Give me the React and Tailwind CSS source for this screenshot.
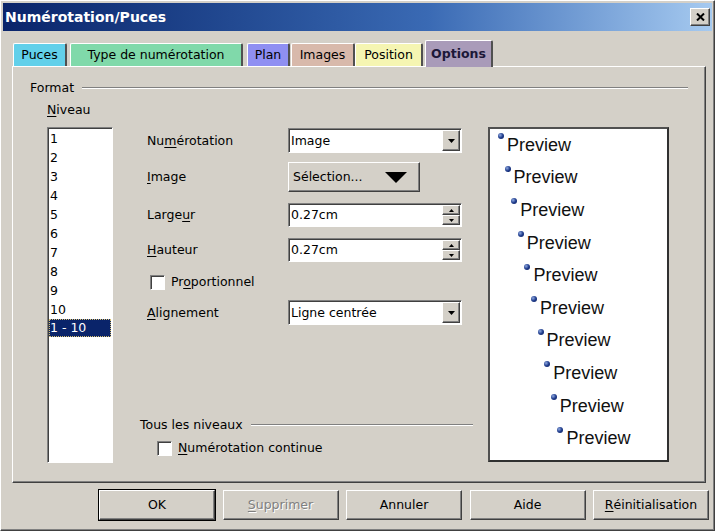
import React from "react";

const font = "font-['DejaVu_Sans',sans-serif] text-[12.5px] leading-[16px] text-black";
const raised =
  "border border-t-white border-l-white border-r-[#404040] border-b-[#404040] shadow-[inset_-1px_-1px_0_#808080]";
const sunken =
  "border border-t-[#808080] border-l-[#808080] border-r-white border-b-white shadow-[inset_1px_1px_0_#404040]";

const Key = ({ children }) => (
  <span className="underline decoration-1 underline-offset-[2px]">{children}</span>
);

const TABS = [
  { label: "Puces", cls: "ml-[10px] w-[54px] bg-[#62d0ea]" },
  { label: "Type de numérotation", cls: "ml-[3px] w-[173px] bg-[#80d9aa]" },
  { label: "Plan", cls: "ml-[4px] w-[43px] bg-[#8f8ff2]" },
  { label: "Images", cls: "ml-[1px] w-[64px] bg-[#d8b9ab]" },
  { label: "Position", cls: "ml-0 w-[68px] bg-[#f5f5b2]" },
];

const LEVELS = ["1", "2", "3", "4", "5", "6", "7", "8", "9", "10"];

const DownTri = () => (
  <svg width="7" height="4" viewBox="0 0 7 4">
    <path d="M0 0h7L3.5 4z" fill="#000" />
  </svg>
);

const Combo = ({ value }) => (
  <div className={`${sunken} bg-white h-[25px] w-[174px] p-[1px] flex items-center`}>
    <span className="flex-1 pl-[1px]">{value}</span>
    <div className={`${raised} bg-[#d4d0c8] w-[18px] h-full flex items-center justify-center`}>
      <DownTri />
    </div>
  </div>
);

const Spin = ({ value }) => (
  <div className={`${sunken} bg-white h-[24px] w-[174px] p-[1px] flex items-center`}>
    <span className="flex-1 pl-[1px]">{value}</span>
    <div className="w-[18px] h-full flex flex-col">
      <div className={`${raised} bg-[#d4d0c8] flex-1 flex items-center justify-center`}>
        <svg width="5" height="3" viewBox="0 0 5 3">
          <path d="M0 3h5L2.5 0z" fill="#000" />
        </svg>
      </div>
      <div className={`${raised} bg-[#d4d0c8] flex-1 flex items-center justify-center`}>
        <svg width="5" height="3" viewBox="0 0 5 3">
          <path d="M0 0h5L2.5 3z" fill="#000" />
        </svg>
      </div>
    </div>
  </div>
);

const Check = () => <span className={`${sunken} bg-white w-[15px] h-[15px] shrink-0`} />;

const Row = ({ label, mt, h, children }) => (
  <div className={`flex items-center ${mt} ${h}`}>
    <div className="w-[141px]">{label}</div>
    {children}
  </div>
);

export default function App() {
  return (
    <div
      className={`${font} ${raised} w-[715px] h-[531px] bg-[#d4d0c8] p-[2px] flex flex-col overflow-hidden`}
    >
      {/* title bar */}
      <div className="h-[28px] shrink-0 bg-linear-to-r from-[#0a246a] via-[#3a6ab4] via-60% to-[#a6caf0] flex items-center pl-[2px] pr-[2px]">
        <span className="text-white font-bold text-[14px] leading-[18px] flex-1">Numérotation/Puces</span>
        <div className={`${raised} bg-[#d4d0c8] w-[20px] h-[18px] flex items-center justify-center`}>
          <svg width="9" height="8" viewBox="0 0 9 8">
            <path d="M1 0.5l7 7M8 0.5l-7 7" stroke="#000" strokeWidth="2" />
          </svg>
        </div>
      </div>

      {/* tabs */}
      <div className="mt-[9px] h-[26px] flex items-end shrink-0">
        {TABS.map((t) => (
          <div
            key={t.label}
            className={`${t.cls} h-[23px] flex items-center justify-center rounded-t-[2px] border-t border-l border-t-white border-l-white border-r-2 border-r-[#505050]`}
          >
            {t.label}
          </div>
        ))}
        <div className="relative z-10 ml-[2px] w-[68px] h-[27px] -mb-[1px] bg-[#a99bb9] flex items-center justify-center rounded-t-[2px] border-t border-l border-t-white border-l-white border-r-2 border-r-[#505050] font-bold text-[#1c1838]">
          Options
        </div>
      </div>

      {/* panel */}
      <div className={`${raised} ml-[9px] mr-[6px] h-[417px] shrink-0 flex flex-col`}>
        <div className="mt-[13px] pl-[17px] pr-[17px] flex items-center h-[16px]">
          <span>Format</span>
          <div className="flex-1 ml-[8px] border-t border-t-[#808080] border-b border-b-white" />
        </div>

        <div className="pl-[34px]">
          <div className="mt-[6px] h-[16px]">
            <Key>N</Key>iveau
          </div>

          <div className="mt-[9px] flex">
            {/* level list */}
            <div className={`${sunken} bg-white w-[66px] h-[336px] p-[1px]`}>
              {LEVELS.map((l) => (
                <div key={l} className="h-[19px] leading-[19px] pl-[1px]">
                  {l}
                </div>
              ))}
              <div className="h-[18px] leading-[18px] pl-[1px] bg-[#0a246a] text-white outline-1 outline-dotted outline-[#d8c070] -outline-offset-1">
                1 - 10
              </div>
            </div>

            {/* settings */}
            <div className="ml-[34px] w-[326px] h-[336px] flex flex-col">
              <Row label={<>Nu<Key>m</Key>érotation</>} mt="mt-[1px]" h="h-[25px]">
                <Combo value="Image" />
              </Row>
              <Row label={<><Key>I</Key>mage</>} mt="mt-[9px]" h="h-[30px]">
                <div className={`${raised} bg-[#d4d0c8] w-[132px] h-[30px] flex items-center pl-[4px]`}>
                  <span className="w-[92px]">Sélection...</span>
                  <svg width="22" height="11" viewBox="0 0 22 11">
                    <path d="M0 0h22L11 11z" fill="#000" />
                  </svg>
                </div>
              </Row>
              <Row label={<>Large<Key>u</Key>r</>} mt="mt-[11px]" h="h-[24px]">
                <Spin value="0.27cm" />
              </Row>
              <Row label={<><Key>H</Key>auteur</>} mt="mt-[11px]" h="h-[24px]">
                <Spin value="0.27cm" />
              </Row>
              <div className="mt-[10px] h-[20px] flex items-center pl-[3px]">
                <Check />
                <span className="ml-[6px]">
                  Pr<Key>o</Key>portionnel
                </span>
              </div>
              <Row label={<><Key>A</Key>lignement</>} mt="mt-[8px]" h="h-[25px]">
                <Combo value="Ligne centrée" />
              </Row>

              <div className="mt-auto -ml-[7px] h-[16px] flex items-center">
                <span>Tous les niveaux</span>
                <div className="flex-1 ml-[8px] border-t border-t-[#808080] border-b border-b-white" />
              </div>
              <div className="mt-[7px] mb-[7px] h-[16px] flex items-center pl-[10px]">
                <Check />
                <span className="ml-[6px]">
                  <Key>N</Key>umérotation continue
                </span>
              </div>
            </div>

            {/* preview */}
            <div className="ml-[15px] w-[181px] h-[335px] bg-white border-2 border-t-[#505050] border-l-[#505050] border-r-[#303030] border-b-[#303030] font-['Liberation_Sans',sans-serif] text-[18px] leading-[21px] text-[#111]">
              {LEVELS.map((l, i) => (
                <div
                  key={l}
                  className="h-[32.6px] flex items-center"
                  style={{ paddingLeft: `${8 + i * 6.6}px` }}
                >
                  <span className="w-[6px] h-[6px] rounded-full shrink-0 mb-[18px] mr-[3px] bg-[radial-gradient(circle_at_35%_35%,#8fa9e0,#1f3c8c_50%,#0a1c58)]" />
                  <span>Preview</span>
                </div>
              ))}
            </div>
          </div>
        </div>
      </div>

      {/* buttons */}
      <div className="mt-[7px] mr-[3px] flex justify-end gap-[7.5px]">
        <div className={`${raised} w-[116px] h-[30px] flex items-center justify-center outline-1 outline-black`}>OK</div>
        <div className={`${raised} w-[116px] h-[30px] flex items-center justify-center text-[#808080] [text-shadow:1px_1px_0_#fff]`}>
          <Key>S</Key>upprimer
        </div>
        <div className={`${raised} w-[116px] h-[30px] flex items-center justify-center`}>Annuler</div>
        <div className={`${raised} w-[116px] h-[30px] flex items-center justify-center`}>Aide</div>
        <div className={`${raised} w-[116px] h-[30px] flex items-center justify-center`}>
          <Key>R</Key>éinitialisation
        </div>
      </div>
    </div>
  );
}
